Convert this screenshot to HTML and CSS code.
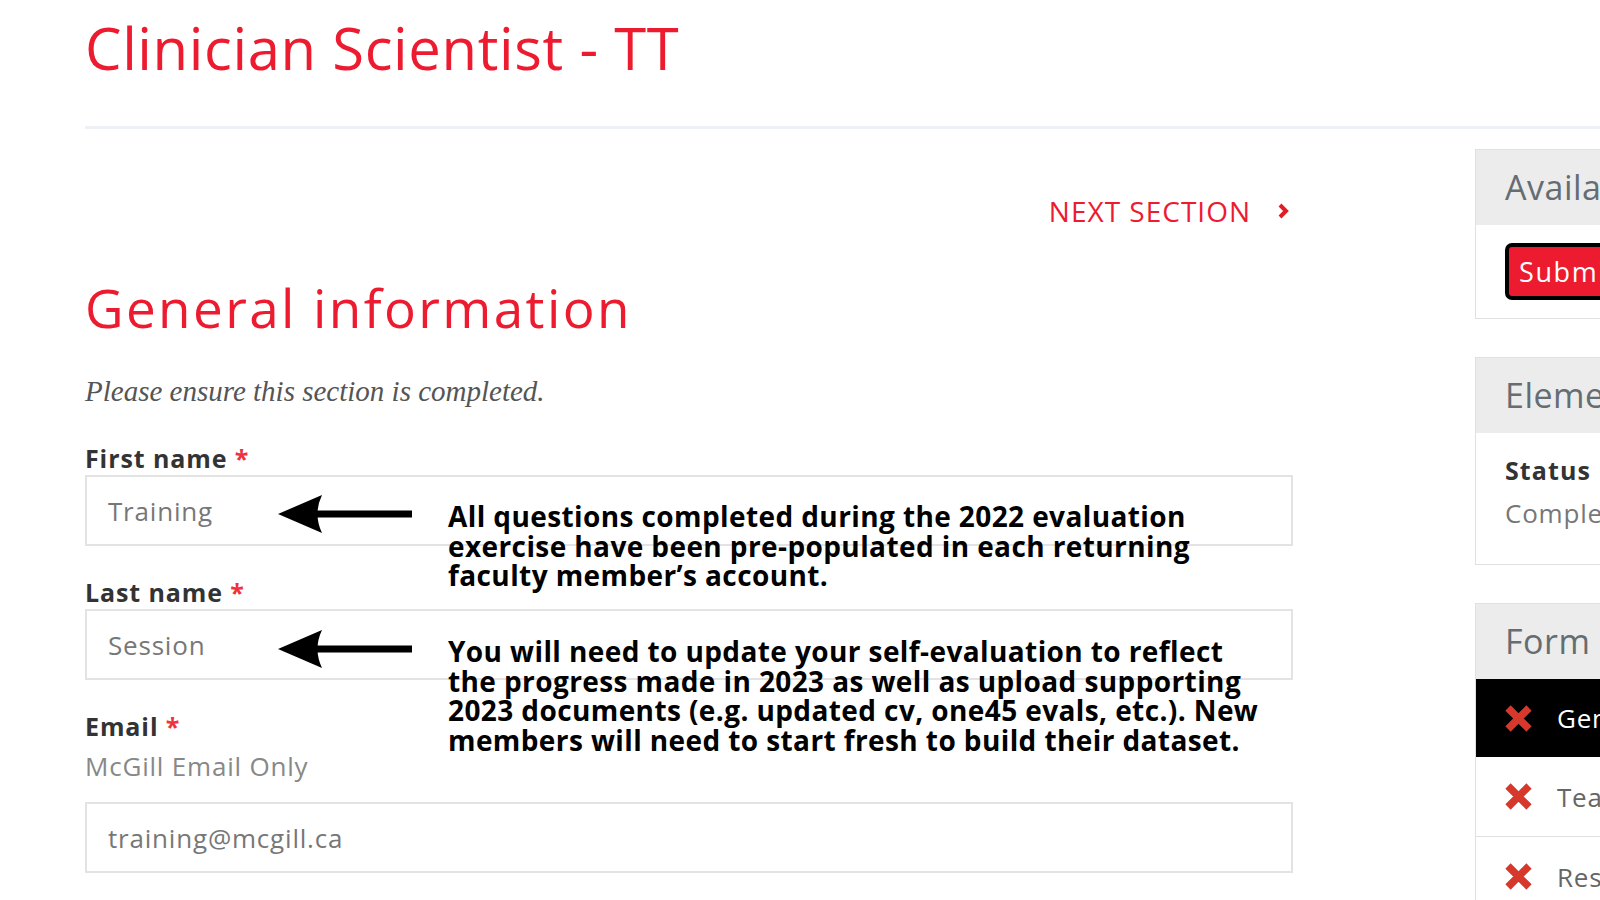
FILE: index.html
```html
<!DOCTYPE html>
<html lang="en">
<head>
  <meta charset="UTF-8" />
  <meta name="viewport" content="width=device-width, initial-scale=1.0" />
  <title>Clinician Scientist - TT</title>
  <link rel="stylesheet" href="styles.css">
</head>
<body>
  <div class="page">
    <header class="page-head">
      <h1 class="page-title">Clinician Scientist - TT</h1>
    </header>

    <div class="layout">
      <main class="form-col">
        <div class="section-nav">
          <a class="next-link" href="#">NEXT SECTION
            <svg class="chev" width="12" height="18" viewBox="0 0 12 18"><polyline points="3,3 9,9 3,15" fill="none" stroke="#e31b23" stroke-width="4"/></svg>
          </a>
        </div>

        <h2 class="section-title">General information</h2>
        <p class="section-note">Please ensure this section is completed.</p>

        <div class="field">
          <label class="field-label">First name <span class="req">*</span></label>
          <input class="text-input" type="text" value="Training" />
        </div>
        <div class="field">
          <label class="field-label">Last name <span class="req">*</span></label>
          <input class="text-input" type="text" value="Session" />
        </div>
        <div class="field">
          <label class="field-label">Email <span class="req">*</span></label>
          <p class="field-help">McGill Email Only</p>
          <input class="text-input" type="text" value="training@mcgill.ca" />
        </div>
      </main>

      <aside class="sidebar">
        <div class="panel">
          <div class="panel-head">Available actions</div>
          <div class="panel-body actions">
            <button class="btn-submit">Submit form</button>
          </div>
        </div>

        <div class="panel">
          <div class="panel-head">Element status</div>
          <div class="panel-body status">
            <div class="status-label">Status</div>
            <div class="status-value">Completed</div>
          </div>
        </div>

        <div class="panel">
          <div class="panel-head">Form sections</div>
          <ul class="section-list">
            <li class="section-item active"><svg class="x-icon" width="29" height="29" viewBox="0 0 29 29"><path d="M4 4 L25 25 M25 4 L4 25" stroke="#d6392b" stroke-width="7.5"/></svg>General information</li>
            <li class="section-item"><svg class="x-icon" width="29" height="29" viewBox="0 0 29 29"><path d="M4 4 L25 25 M25 4 L4 25" stroke="#d6392b" stroke-width="7.5"/></svg>Teaching</li>
            <li class="section-item"><svg class="x-icon" width="29" height="29" viewBox="0 0 29 29"><path d="M4 4 L25 25 M25 4 L4 25" stroke="#d6392b" stroke-width="7.5"/></svg>Research</li>
          </ul>
        </div>
      </aside>
    </div>

    <!-- annotation layer on top of the form -->
    <div class="callout callout-one">
      <svg class="arrow" width="140" height="40" viewBox="0 0 140 40"><path d="M0 19 L44 0 Q35 19 44 38 Z" fill="#000"/><rect x="38" y="15.5" width="96" height="7" fill="#000"/></svg>
      <p class="callout-text">All questions completed during the 2022 evaluation<br>exercise have been pre-populated in each returning<br>faculty member’s account.</p>
    </div>
    <div class="callout callout-two">
      <svg class="arrow" width="140" height="40" viewBox="0 0 140 40"><path d="M0 19 L44 0 Q35 19 44 38 Z" fill="#000"/><rect x="38" y="15.5" width="96" height="7" fill="#000"/></svg>
      <p class="callout-text">You will need to update your self-evaluation to reflect<br>the progress made in 2023 as well as upload supporting<br>2023 documents (e.g. updated cv, one45 evals, etc.). New<br>members will need to start fresh to build their dataset.</p>
    </div>
  </div>
</body>
</html>
```

FILE: styles.css
```css
html, body {
  margin: 0;
  overflow: hidden;
  background: #ffffff;
}
body {
  font-family: 'Open Sans', sans-serif;
  color: #333333;
}
.page {
  position: relative;
  width: 1600px;
  height: 900px;
  overflow: hidden;
}

/* header */
.page-head {
  margin-left: 85px;
  padding: 13px 0 43px;
  border-bottom: 3px solid #edf1f5;
}
.page-title {
  margin: 0;
  font-size: 58px;
  line-height: 70px;
  font-weight: 400;
  letter-spacing: 0.6px;
  color: #ed1b2f;
}

.layout {
  display: flex;
  align-items: flex-start;
  padding-left: 85px;
}
.form-col {
  width: 1208px;
  flex-shrink: 0;
  padding-top: 65px;
}

.section-nav {
  display: flex;
  justify-content: flex-end;
  padding-right: 4px;
}
.next-link {
  display: flex;
  align-items: center;
  gap: 26px;
  font-size: 28px;
  line-height: 34px;
  color: #ed1b2f;
  text-decoration: none;
  letter-spacing: 1px;
}
.section-title {
  margin: 50px 0 0;
  font-size: 53px;
  line-height: 60px;
  font-weight: 400;
  letter-spacing: 2.4px;
  color: #ed1b2f;
}
.section-note {
  margin: 36px 0 0;
  font-family: 'Liberation Serif', serif;
  font-style: italic;
  font-size: 29px;
  line-height: 34px;
  color: #555555;
}

.field { margin-top: 35px; }
.field + .field { margin-top: 31px; }
.field-label {
  display: block;
  margin-bottom: 2px;
  font-size: 25px;
  line-height: 30px;
  font-weight: 700;
  letter-spacing: 0.9px;
  color: #333333;
}
.req { color: #f0323c; font-weight: 700; }
.field-help {
  margin: 10px 0 21px;
  font-size: 26px;
  line-height: 30px;
  letter-spacing: 0.8px;
  color: #888888;
}
.text-input {
  display: block;
  box-sizing: border-box;
  width: 100%;
  height: 71px;
  padding: 0 21px;
  border: 2px solid #e3e3e3;
  font-family: 'Open Sans', sans-serif;
  font-size: 26px;
  letter-spacing: 0.8px;
  color: #777777;
  background: #ffffff;
}

/* sidebar */
.sidebar {
  margin-left: 182px;
  width: 420px;
  flex-shrink: 0;
  padding-top: 20px;
}
.panel {
  border: 1px solid #e0e0e0;
  margin-bottom: 38px;
}
.panel-head {
  height: 75px;
  line-height: 75px;
  padding-left: 29px;
  background: #ececec;
  font-size: 34px;
  letter-spacing: 0.5px;
  color: #656d73;
  white-space: nowrap;
}
.actions { padding: 18px 29px; }
.btn-submit {
  height: 57px;
  padding: 0 10px;
  border: 4px solid #000000;
  border-radius: 7px;
  background: #ed1b2f;
  color: #ffffff;
  font-family: 'Open Sans', sans-serif;
  font-size: 27px;
  letter-spacing: 1.6px;
  white-space: nowrap;
}
.status { padding: 22px 29px 36px; }
.status-label {
  font-size: 25px;
  line-height: 30px;
  font-weight: 700;
  letter-spacing: 1.1px;
  color: #333333;
}
.status-value {
  margin-top: 13px;
  font-size: 26px;
  line-height: 30px;
  letter-spacing: 0.8px;
  color: #777777;
}
.section-list {
  list-style: none;
  margin: 0;
  padding: 0;
}
.section-item {
  display: flex;
  align-items: center;
  gap: 24px;
  height: 79px;
  padding-left: 28px;
  border-bottom: 1px solid #e0e0e0;
  font-size: 26px;
  letter-spacing: 0.8px;
  color: #666666;
  white-space: nowrap;
}
.section-item.active {
  height: 78px;
  background: #000000;
  color: #ffffff;
  border-bottom: none;
}
.x-icon { flex-shrink: 0; }

/* annotations */
.callout {
  position: absolute;
  left: 278px;
  display: flex;
  align-items: flex-start;
  gap: 30px;
}
.callout-one { top: 495px; }
.callout-two { top: 630px; }
.arrow { flex-shrink: 0; }
.callout-text {
  margin: 7px 0 0;
  font-size: 28px;
  line-height: 29.5px;
  font-weight: 700;
  letter-spacing: 0.4px;
  white-space: nowrap;
  color: #000000;
}
```
